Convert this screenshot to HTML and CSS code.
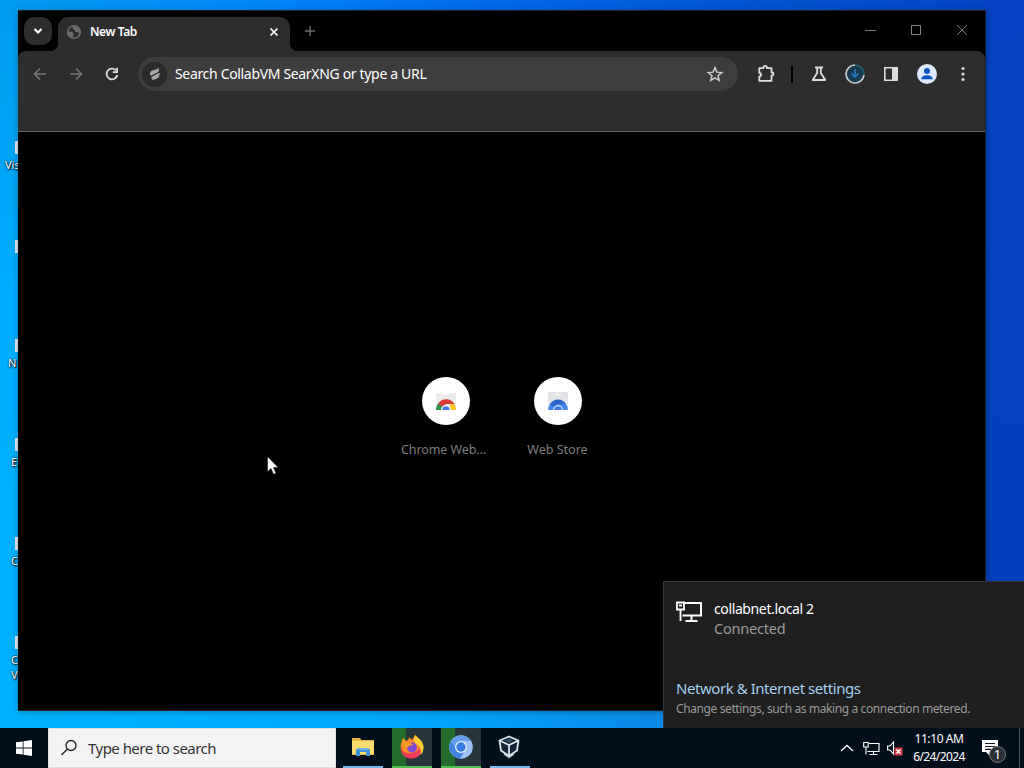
FILE: index.html
```html
<!DOCTYPE html>
<html lang="en">

<head>
    <meta charset="UTF-8">
    <meta name="viewport" content="width=device-width, initial-scale=1.0">
    <title>Desktop</title>
    <link rel="stylesheet" href="styles.css">
</head>

<body>
    <div class="desktop">
        <!-- desktop shortcuts, mostly behind the browser -->
        <div class="shortcut s1"><i></i><span>Vis</span></div>
        <div class="shortcut s2"><i></i></div>
        <div class="shortcut s3"><i></i><span>N</span></div>
        <div class="shortcut s4"><i></i><span>E</span></div>
        <div class="shortcut s5"><i></i><span>C</span></div>
        <div class="shortcut s6"><i></i><span>C<br>V</span></div>

        <!-- browser -->
        <div class="browser">
            <div class="tabs">
                <button class="tab-search">
                    <svg width="10" height="8" viewBox="0 0 10 8"><path d="M1.5 2 5 5.5 8.500 2" fill="none" stroke="#fff" stroke-width="2"/></svg>
                </button>
                <div class="tab">
                    <svg class="globe" width="16" height="16" viewBox="0 0 16 16">
                        <circle cx="8" cy="8" r="6.300" fill="none" stroke="#6c6c6c" stroke-width="1.600"/>
                        <path d="M2 7.500h3.500l2 2v1.500l-1 2.500C3.500 13 2 11 2 7.500zM7 2l-.5 2.500 2 1.500 1 2h2l2.500 1.500C14.500 5 12 2 7 2z" fill="#6c6c6c"/>
                    </svg>
                    <span>New Tab</span>
                    <svg class="close" width="10" height="10" viewBox="0 0 10 10"><path d="M1.500 1.500l7 7m0-7l-7 7" stroke="#fff" stroke-width="1.700"/></svg>
                </div>
                <svg class="plus" width="12" height="12" viewBox="0 0 12 12"><path d="M6 1v10M1 6h10" stroke="#6a6a6a" stroke-width="1.400"/></svg>
                <div class="win-buttons">
                    <svg width="12" height="12" viewBox="0 0 12 12"><path d="M1 6.500h11" stroke="#777"/></svg>
                    <svg width="12" height="12" viewBox="0 0 12 12"><path d="M1.500 1.500h9v9h-9z" fill="none" stroke="#808080"/></svg>
                    <svg width="12" height="12" viewBox="0 0 12 12"><path d="M1 1l10 10M11 1L1 11" stroke="#777"/></svg>
                </div>
            </div>

            <div class="toolbar">
                <div class="nav">
                    <svg width="16" height="16" viewBox="0 0 16 16"><path d="M14 8H3M8 2.500L2.500 8 8 13.500" fill="none" stroke="#777" stroke-width="1.600"/></svg>
                    <svg width="16" height="16" viewBox="0 0 16 16"><path d="M2 8h11M8 2.500L13.500 8 8 13.500" fill="none" stroke="#777" stroke-width="1.600"/></svg>
                    <svg width="16" height="16" viewBox="0 0 16 16"><path d="M13.300 9A5.400 5.400 0 1 1 12 4.300" fill="none" stroke="#ddd" stroke-width="1.800"/><path d="M14 1.700v5.300H8.700V5.300h3.500V1.700z" fill="#ddd"/></svg>
                </div>
                <div class="omnibox">
                    <div class="engine">
                        <svg width="14" height="14" viewBox="0 0 14 14"><path d="M2 6.500C2 4 5 3 7 3l4-2-.5 4L5 7.500 2.500 9zM5 9l6-3 1.500 1-2 1.500 1 1-2.500 2-4 1.500-2-2z" fill="#aaa"/></svg>
                    </div>
                    <span>Search CollabVM SearXNG or type a URL</span>
                    <svg class="star" width="18" height="18" viewBox="0 0 24 24"><path d="M12 3.500l2.500 6 6.500.5-5 4.200 1.600 6.300-5.600-3.400-5.600 3.400L8 14.200 3 10l6.500-.5z" fill="none" stroke="#ccc" stroke-width="2"/></svg>
                </div>
                <div class="actions">
                    <svg width="20" height="20" viewBox="0 0 20 20"><path d="M3.300 4.200h4.200V3.600a1.700 1.700 0 0 1 3.400 0v.6h4.600v4.300h.5a1.500 1.500 0 0 1 0 3h-.5v5.300H3.300v-4.300c2.300 0 2.300-3.600 0-3.600z" fill="none" stroke="#ddd" stroke-width="1.800" stroke-linejoin="round"/></svg>
                    <b class="divider"></b>
                    <svg width="18" height="18" viewBox="0 0 18 18"><path d="M5 2.500h8M7.200 3v5L2.700 15h12.600L10.800 8V3" fill="none" stroke="#ddd" stroke-width="1.800" stroke-linejoin="round"/></svg>
                    <svg width="20" height="20" viewBox="0 0 20 20"><circle cx="10" cy="10" r="9" fill="#173a50"/><path d="M10 1a9 9 0 1 0 9 10" fill="none" stroke="#ccc" stroke-width="1.700"/><path d="M10 1a9 9 0 0 1 9 10" fill="none" stroke="#24606c" stroke-width="1.500"/><path d="M10 5v8M6.500 9.500L10 13l3.500-3.500" fill="none" stroke="#2a79bd" stroke-width="1.700"/></svg>
                    <svg width="16" height="16" viewBox="0 0 16 16"><path d="M1.800 1.800h12.400v12.400H1.800z" fill="none" stroke="#ddd" stroke-width="1.600"/><path d="M9 1.500h5.500v13H9z" fill="#ddd"/></svg>
                    <svg width="20" height="20" viewBox="0 0 20 20"><circle cx="10" cy="10" r="10" fill="#dce9ff"/><circle cx="10" cy="7" r="3" fill="#0b57c4"/><path d="M4.300 14.800c0-4.800 11.400-4.800 11.400 0v.5H4.300z" fill="#0b57c4"/></svg>
                    <svg width="4" height="16" viewBox="0 0 4 16"><g fill="#ddd"><circle cx="2" cy="2.500" r="1.600"/><circle cx="2" cy="8" r="1.600"/><circle cx="2" cy="13.500" r="1.600"/></g></svg>
                </div>
            </div>

            <div class="page">
                <div class="tile">
                    <div class="tile-icon">
                        <svg width="24" height="24" viewBox="0 0 24 24">
                            <path d="M2 4h5q5 4 10 0h5v17H2z" fill="#ececec"/>
                            <path d="M2 21a10 10 0 0 1 4-8l4 8z" fill="#259447"/>
                            <path d="M22 21a10 10 0 0 0-4-8l-4 8z" fill="#fbc31b"/>
                            <path d="M4 15a9.500 9.500 0 0 1 16.500 0H12l-3 3z" fill="#d93a32"/>
                            <path d="M7 21a5 5 0 0 1 10 0z" fill="#fff"/>
                            <path d="M8.300 21a3.700 3.700 0 0 1 7.400 0z" fill="#4576e5"/>
                        </svg>
                    </div>
                    <span class="clipped">Chrome Web...</span>
                </div>
                <div class="tile">
                    <div class="tile-icon">
                        <svg width="24" height="24" viewBox="0 0 24 24">
                            <path d="M2 3h20v18H2z" fill="#e2e4e7"/>
                            <path d="M9 5h6v1H9z" fill="#fff"/>
                            <path d="M2 21a10 10 0 0 1 20 0z" fill="#4285e8"/>
                            <path d="M4 15a9.500 9.500 0 0 1 16 0H12l-3 3z" fill="#2e62cb"/>
                            <path d="M7 21a5 5 0 0 1 10 0z" fill="#cfe0fb"/>
                            <path d="M8.300 21a3.700 3.700 0 0 1 7.400 0z" fill="#3d78dc"/>
                        </svg>
                    </div>
                    <span>Web Store</span>
                </div>
            </div>
        </div>

        <svg class="cursor" width="12" height="19" viewBox="0 0 12 19"><path d="M.5.500v15.300l3.500-3.300 2.500 5.700 2.500-1-2.500-5.600h4.800z" fill="#fff" stroke="#111" stroke-width=".6"/></svg>

        <!-- network flyout -->
        <div class="flyout">
            <div class="network">
                <svg width="27" height="22" viewBox="0 0 27 22">
                    <path d="M9 2h16v12.500H6.500M15.500 15v4M9.500 20h12" fill="none" stroke="#fff" stroke-width="2"/>
                    <path d="M1 1.500h7v7H1z" fill="none" stroke="#fff" stroke-width="1.800"/>
                    <path d="M3 4.500h3M4.500 9v11" fill="none" stroke="#fff" stroke-width="1.800"/>
                </svg>
                <div>
                    <div class="net-name">collabnet.local 2</div>
                    <div class="net-state">Connected</div>
                </div>
            </div>
            <div class="net-settings">
                <div class="net-link">Network &amp; Internet settings</div>
                <div class="net-hint">Change settings, such as making a connection metered.</div>
            </div>
        </div>

        <!-- taskbar -->
        <div class="taskbar">
            <div class="start">
                <svg width="16" height="16" viewBox="0 0 16 16"><path d="M0 2.300L6.700 1.400v6.100H0zM7.500 1.300L16 .1v7.400H7.500zM0 8.400h6.700v6.200L0 13.700zM7.500 8.400H16v7.500l-8.500-1.200z" fill="#fff"/></svg>
            </div>
            <div class="search">
                <svg width="18" height="18" viewBox="0 0 18 18"><circle cx="11" cy="6.500" r="5" fill="none" stroke="#222" stroke-width="1.300"/><path d="M7.500 10L1.500 16" stroke="#222" stroke-width="1.400"/></svg>
                <span>Type here to search</span>
            </div>
            <div class="apps">
                <div class="app">
                    <svg width="24" height="20" viewBox="0 0 24 20">
                        <path d="M1 1h8l1.500 2H23v15H1z" fill="#eab43c"/>
                        <path d="M1 4h22v13H1z" fill="#fbdc70"/>
                        <path d="M5 19v-6l2-2h10l2 2v6h-4v-4H9v4z" fill="#3f91d6"/>
                        <path d="M7 11h10v2H7z" fill="#69b6ed"/>
                    </svg>
                </div>
                <div class="app green">
                    <svg width="26" height="26" viewBox="0 0 26 26">
                        <path d="M16 1c4 4 8 6 8.500 12A11.500 11.500 0 0 1 2 15C1 11 3 7 4 4l3 3c2-1 3-2 3-4l3 3z" fill="#ff8a26"/>
                        <path d="M2 12c1 7 6 8 11 7s7-3 8-7l2 5c-2 6-7 8-12 7.500C5 24 1 19 2 12z" fill="#f43c59"/>
                        <path d="M16 1c4 4 8 6 8.500 12 0 4-1 6-3 8 1-6-1-9-4-11-2-2-3-5-1.500-9z" fill="#ffcf35"/>
                        <circle cx="13" cy="13.500" r="5" fill="#8048d5"/>
                        <path d="M4 4l3 4 5 1 2 2-4 1-2 2c-4-1-5-5-4-10z" fill="#ff9c24"/>
                    </svg>
                </div>
                <div class="app green">
                    <svg width="24" height="24" viewBox="0 0 24 24">
                        <circle cx="12" cy="12" r="11.800" fill="#9cc2f6"/>
                        <path d="M2 6a11.800 11.800 0 0 0 9 17.700l5-8.700-8-1z" fill="#4282e0"/>
                        <path d="M2 6a11.800 11.800 0 0 1 20 0H12L7 14z" fill="#669ded"/>
                        <circle cx="12" cy="12" r="6" fill="#e5f0ff"/>
                        <circle cx="12" cy="12" r="4.700" fill="#397be0"/>
                    </svg>
                </div>
                <div class="app vm">
                    <svg width="24" height="24" viewBox="0 0 24 24">
                        <path d="M6 15l1 5 5 3.500 5-3.500 1-5z" fill="#9faebb"/>
                        <path d="M12 1.500l9.500 4-1.500 10-8 5.500-8-5.500-1.500-10z" fill="#142434" stroke="#dce6ef" stroke-width="1.800" stroke-linejoin="round"/>
                        <path d="M2.500 5.500l9.500 4.500 9.500-4.500M12 10v10" fill="none" stroke="#dce6ef" stroke-width="1.800"/>
                        <path d="M8 5.500l4-1.800 4 1.800-4 2z" fill="#385069"/>
                    </svg>
                </div>
            </div>
            <div class="tray">
                <svg width="14" height="8" viewBox="0 0 14 8"><path d="M1 7l6-5.500L13 7" fill="none" stroke="#fff" stroke-width="1.300"/></svg>
                <svg class="tray-net" width="17" height="15" viewBox="0 0 17 15"><path d="M6 2.500h10v8H4.500M10.500 11v2.500M6.500 13.500h8M.7 1.500h4.500V6H.700zM3 6v7.500" fill="none" stroke="#fff" stroke-width="1.100"/></svg>
                <svg class="tray-sound" width="16" height="16" viewBox="0 0 16 16"><path d="M.600 6H3l3.500-4v12L3 10H.6z" fill="none" stroke="#fff" stroke-width="1.100"/><path d="M7.500 7.500h8v8h-8z" fill="#d53b4a"/><path d="M9.500 9.500l4 4m0-4l-4 4" stroke="#fff" stroke-width="1.500"/></svg>
                <div class="clock">
                    <span class="time">11:10 AM</span>
                    <span class="date">6/24/2024</span>
                </div>
                <div class="notify">
                    <svg width="17" height="17" viewBox="0 0 17 17"><path d="M0 0h16v12H8v4l-4-4H0z" fill="#fff"/><path d="M3 3.500h10M3 6.500h10M3 9.300h6" stroke="#101822" stroke-width="1.200"/></svg>
                    <span class="badge">1</span>
                </div>
                <div class="show-desktop"></div>
            </div>
        </div>
    </div>
</body>

</html>
```
FILE: styles.css
```css
* {
    box-sizing: border-box;
}

body {
    margin: 0;
    font-family: "Noto Sans", "Open Sans", sans-serif;
}

svg {
    display: block;
    flex: none;
}

.desktop {
    position: relative;
    width: 1024px;
    height: 768px;
    overflow: hidden;
    background:
        linear-gradient(90deg, #00b2ff 0, #00a8ff 400px, #0b88e6 660px, #0040bd 985px) 0 700px / 100% 28px no-repeat,
        linear-gradient(#0643c2, #0140b8) 985px 0 / 39px 100% no-repeat,
        linear-gradient(#009bee, #00adff 40%, #00b2ff) 0 0 / 18px 100% no-repeat,
        linear-gradient(90deg, #009bee, #0087f8 25%, #0068e8 50%, #0052cf 75%, #0643c2);
}

/* shortcuts */
.shortcut {
    position: absolute;
    left: 0;
    width: 40px;
    height: 50px;
    color: #fff;
    font-size: 11px;
    line-height: 15px;
    text-shadow: 1px 1px 2px #000, 0 0 2px #000;
}

.shortcut i {
    display: block;
    width: 3px;
    height: 13px;
    margin-left: 15px;
    background: #e4edf8;
}

.shortcut span {
    display: block;
    padding: 3px 0 0 11px;
}

.s1 { top: 141px; }
.s1 span { padding-left: 5px; }
.s2 { top: 240px; }
.s3 { top: 339px; }
.s3 span { padding-left: 8px; }
.s4 { top: 438px; }
.s5 { top: 537px; }
.s6 { top: 636px; }

/* browser window */
.browser {
    position: absolute;
    left: 18px;
    top: 10px;
    width: 968px;
    height: 701px;
    display: flex;
    flex-direction: column;
    background: #000;
    border: 1px solid #222;
    border-left: 0;
    box-shadow: 0 1px 6px rgba(0, 0, 0, 0.3);
}

.tabs {
    display: flex;
    align-items: center;
    height: 40px;
    padding-left: 6px;
}

.tab-search {
    display: flex;
    align-items: center;
    justify-content: center;
    width: 28px;
    height: 28px;
    padding: 0;
    border: 0;
    border-radius: 10px;
    background: #2d2d2d;
}

.tab {
    position: relative;
    display: flex;
    align-items: center;
    align-self: flex-end;
    width: 232px;
    height: 34px;
    margin-left: 6px;
    padding: 0 11px 5px 8px;
    border-radius: 10px 10px 0 0;
    background: #2d2d2d;
    color: #fff;
    font-size: 12px;
    font-weight: 600;
}

.tab span {
    margin-left: 8px;
    letter-spacing: -0.4px;
}

/* flared bottom corners of the active tab */
.tab::before,
.tab::after {
    content: '';
    position: absolute;
    bottom: 0;
    width: 8px;
    height: 8px;
}

.tab::before {
    left: -8px;
    background: radial-gradient(circle at 0 0, transparent 8px, #2d2d2d 8.5px);
}

.tab::after {
    right: -8px;
    background: radial-gradient(circle at 100% 0, transparent 8px, #2d2d2d 8.5px);
}

.close {
    margin-left: auto;
}

.plus {
    margin-left: 14px;
}

.win-buttons {
    display: flex;
    gap: 34px;
    margin: 0 17px 2px auto;
}

.toolbar {
    display: flex;
    align-items: flex-start;
    height: 81px;
    padding: 6px 0 0 14px;
    border-bottom: 1px solid #656565;
    border-radius: 8px 8px 0 0;
    background: #2d2d2d;
}

.nav {
    display: flex;
    align-items: center;
    gap: 20px;
    height: 34px;
}

.omnibox {
    display: flex;
    align-items: center;
    width: 600px;
    height: 34px;
    margin-left: 18px;
    padding: 0 14px 0 4px;
    border-radius: 17px;
    background: #3d3d3d;
    color: #fff;
    font-size: 14px;
}

.omnibox span {
    margin: 0 0 2px 8px;
    letter-spacing: -0.33px;
    white-space: nowrap;
}

.engine {
    display: flex;
    align-items: center;
    justify-content: center;
    width: 25px;
    height: 25px;
    border-radius: 50%;
    background: #2b2b2b;
}

.star {
    margin-left: auto;
}

.actions {
    display: grid;
    grid-template-columns: 35px 18px repeat(5, 36px);
    align-items: center;
    justify-items: center;
    height: 34px;
    margin-left: 10px;
}

.divider {
    width: 2px;
    height: 17px;
    background: #000;
}

.page {
    display: flex;
    flex: 1;
    justify-content: center;
    padding-top: 245px;
}

.tile {
    display: flex;
    flex-direction: column;
    align-items: center;
    width: 112px;
    color: #7c7c7c;
    font-size: 12.5px;
}

.tile .clipped {
    margin-right: 4px;
    letter-spacing: -0.1px;
}

.tile-icon {
    display: flex;
    align-items: center;
    justify-content: center;
    width: 48px;
    height: 48px;
    margin-bottom: 16px;
    border-radius: 50%;
    background: #fff;
}

.cursor {
    position: absolute;
    left: 267px;
    top: 456px;
}

/* network flyout */
.flyout {
    position: absolute;
    left: 663px;
    top: 581px;
    width: 361px;
    height: 147px;
    padding: 17px 13px 0 12px;
    border: 1px solid #353535;
    border-right: 0;
    border-bottom: 0;
    background: #1f1f1f;
    white-space: nowrap;
}

.network {
    display: flex;
    gap: 11px;
    height: 78px;
}

.network svg {
    margin-top: 2px;
}

.net-name {
    color: #fff;
    font-size: 14px;
    line-height: 20px;
    letter-spacing: -0.38px;
}

.net-state {
    color: #9b9b9b;
    font-size: 14.5px;
    line-height: 18px;
    letter-spacing: -0.2px;
}

.net-link {
    color: #a6d0ee;
    font-size: 15px;
    line-height: 22px;
    letter-spacing: -0.45px;
}

.net-hint {
    color: #9b9b9b;
    font-size: 12px;
    line-height: 20px;
    letter-spacing: -0.39px;
}

/* taskbar */
.taskbar {
    position: absolute;
    left: 0;
    bottom: 0;
    display: flex;
    width: 100%;
    height: 40px;
    background: #03101c;
    color: #fff;
}

.start {
    display: flex;
    align-items: center;
    justify-content: center;
    width: 48px;
}

.search {
    display: flex;
    align-items: center;
    width: 288px;
    padding-left: 11px;
    border: 1px solid #ddd;
    background: #f3f3f3;
    color: #333;
    font-size: 15px;
}

.search span {
    margin-left: 10px;
    letter-spacing: -0.53px;
}

.apps {
    display: flex;
    gap: 9px;
    margin-left: 7px;
}

.app {
    display: flex;
    align-items: center;
    justify-content: center;
    width: 40px;
    border-bottom: 2px solid #76b9ed;
}

.app.green {
    border-color: #4fc34e;
    background: linear-gradient(90deg, #256b2b 14px, #27363b 14px);
}

.app.vm {
    padding-right: 3px;
}

.tray {
    display: flex;
    align-items: center;
    margin-left: auto;
}

.tray-net {
    margin-left: 9px;
}

.tray-sound {
    margin-left: 7px;
}

.clock {
    display: flex;
    flex-direction: column;
    align-items: center;
    width: 54px;
    margin-left: 9px;
    font-size: 12px;
    line-height: 18px;
    white-space: nowrap;
}

.time {
    letter-spacing: -0.4px;
}

.date {
    letter-spacing: -0.6px;
}

.notify {
    position: relative;
    margin-left: 16px;
}

.badge {
    position: absolute;
    left: 7px;
    top: 6px;
    width: 17px;
    height: 17px;
    border: 1px solid #777;
    border-radius: 50%;
    background: #2b3036;
    font-size: 13px;
    line-height: 15px;
    text-align: center;
}

.show-desktop {
    width: 5px;
    height: 40px;
    margin-left: 20px;
    border-left: 1px solid #4b535b;
}
```
